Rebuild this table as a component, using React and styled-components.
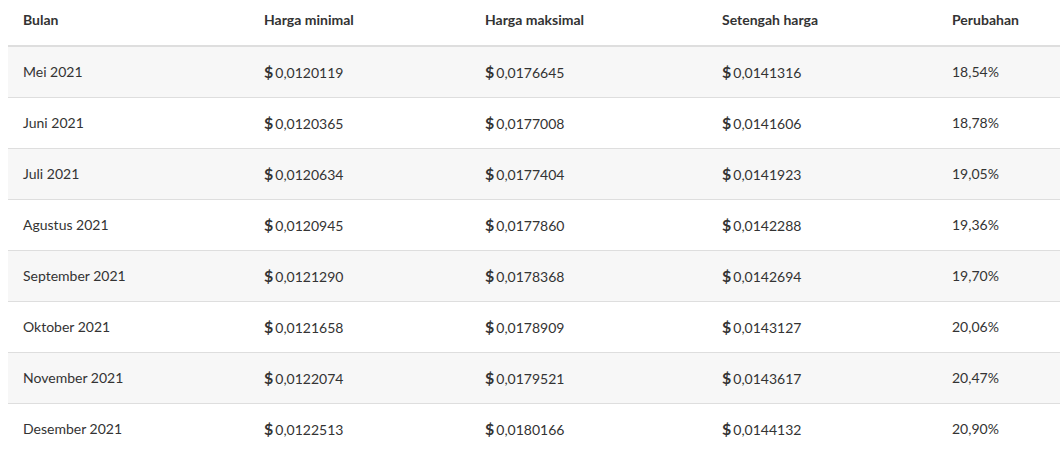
import styled, { createGlobalStyle } from "styled-components";

const rows = [
  ["Mei 2021", "0,0120119", "0,0176645", "0,0141316", "18,54%"],
  ["Juni 2021", "0,0120365", "0,0177008", "0,0141606", "18,78%"],
  ["Juli 2021", "0,0120634", "0,0177404", "0,0141923", "19,05%"],
  ["Agustus 2021", "0,0120945", "0,0177860", "0,0142288", "19,36%"],
  ["September 2021", "0,0121290", "0,0178368", "0,0142694", "19,70%"],
  ["Oktober 2021", "0,0121658", "0,0178909", "0,0143127", "20,06%"],
  ["November 2021", "0,0122074", "0,0179521", "0,0143617", "20,47%"],
  ["Desember 2021", "0,0122513", "0,0180166", "0,0144132", "20,90%"],
];

const columns = [
  { title: "Bulan", width: 241 },
  { title: "Harga minimal", width: 221 },
  { title: "Harga maksimal", width: 237 },
  { title: "Setengah harga", width: 230 },
  { title: "Perubahan", width: 123 },
];

function App() {
  return (
    <>
      <GlobalStyle />
      <Wrapper>
        <PriceTable>
          <colgroup>
            {columns.map((c) => (
              <col key={c.title} style={{ width: c.width }} />
            ))}
          </colgroup>
          <thead>
            <tr>
              {columns.map((c) => (
                <HeadCell key={c.title}>{c.title}</HeadCell>
              ))}
            </tr>
          </thead>
          <tbody>
            {rows.map((r, i) => (
              <Row key={r[0]} $striped={i % 2 === 0}>
                <Cell>{r[0]}</Cell>
                {r.slice(1, 4).map((v, j) => (
                  <Cell key={j}>
                    <Dollar>$</Dollar>
                    {v}
                  </Cell>
                ))}
                <Cell>{r[4]}</Cell>
              </Row>
            ))}
          </tbody>
        </PriceTable>
      </Wrapper>
    </>
  );
}

export default App;

/****************** styled component ***************/

const GlobalStyle = createGlobalStyle`
  body {
    margin: 0;
    background: #fff;
    font-family: Lato, "Liberation Sans", sans-serif;
    color: #333;
  }
`;

const Wrapper = styled.div`
  padding-left: 8px;
`;

const PriceTable = styled.table`
  width: 1052px;
  border-collapse: collapse;
  table-layout: fixed;
  font-size: 14px;
`;

const HeadCell = styled.th`
  height: 38px;
  padding: 0 15px 7px;
  text-align: left;
  font-weight: 700;
  vertical-align: middle;
  border-bottom: 2px solid #dedede;
  color: #333;
`;

const Row = styled.tr`
  background: ${(p) => (p.$striped ? "#f7f7f7" : "#fff")};
  border-bottom: 1px solid #dedede;

  &:last-child {
    border-bottom: none;
  }
`;

const Cell = styled.td`
  height: 49px;
  padding: 0 15px 1px;
  vertical-align: middle;
`;

const Dollar = styled.span`
  font-weight: 700;
  font-size: 16px;
  margin-right: 2px;
`;
